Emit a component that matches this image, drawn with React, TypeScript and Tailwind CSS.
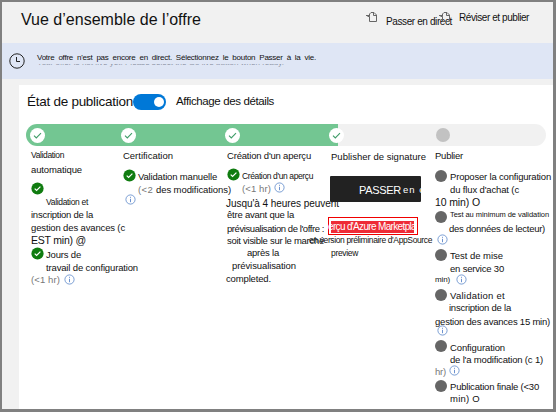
import { useLayoutEffect, useRef, useState } from "react";
import type { ReactNode } from "react";

/* Text tracked so that it fills a given measure. */
function Fit({ w, className = "", children }: { w: number; className?: string; children: string }) {
  const ref = useRef<HTMLSpanElement>(null);
  const [spacing, setSpacing] = useState(0);
  useLayoutEffect(() => {
    const el = ref.current;
    if (el) setSpacing((w - el.getBoundingClientRect().width) / children.length);
  }, [w, children]);
  return (
    <span ref={ref} className={`shrink-0 whitespace-pre leading-[12px] ${className}`} style={{ letterSpacing: spacing }}>
      {children}
    </span>
  );
}

function Row({ className, children }: { className: string; children: ReactNode }) {
  return <div className={`flex shrink-0 items-end ${className}`}>{children}</div>;
}

function Done() {
  return (
    <svg className="mb-[1px] size-[13px] shrink-0" viewBox="0 0 13 13">
      <circle cx="6.5" cy="6.5" r="6.1" fill="#107c10" />
      <path d="M3.7 6.6 5.6 8.5 9.4 4.7" fill="none" stroke="#fff" strokeWidth="1.2" />
    </svg>
  );
}

function Pending() {
  return <span className="mb-[1px] size-[12px] shrink-0 rounded-full bg-[#666666]" />;
}

function Info() {
  return (
    <svg className="size-[11px] shrink-0" viewBox="0 0 11 11" fill="none" stroke="#5b86c9">
      <circle cx="5.5" cy="5.5" r="4.6" strokeWidth="0.8" />
      <path d="M5.5 4.8v3.4M5.5 2.8v1" strokeWidth="0.9" />
    </svg>
  );
}

function Step() {
  return (
    <span className="flex size-[15px] shrink-0 items-center justify-center rounded-full bg-white">
      <svg className="size-[9px]" viewBox="0 0 9 9">
        <path d="M1 4.7 3.3 7 8 2.2" fill="none" stroke="#3f9c68" strokeWidth="1.1" />
      </svg>
    </span>
  );
}

function PageIcon() {
  return (
    <svg className="size-[12px] shrink-0" viewBox="0 0 12 12" fill="none" stroke="#666">
      <path d="M3.5 5.5V3L5 1.5H8L10.5 4V10.5H3.5V5.5M7.5 1.5V4.5H10.5" strokeWidth="1" />
      <path d="M0 4.5h3.5M1.5 5.5h2" strokeWidth="1" />
    </svg>
  );
}

export default function App() {
  return (
    <div className="h-[412px] w-[556px] overflow-hidden border-t-2 border-r-[3px] border-b-[3px] border-l-2 border-[#808080] bg-[#f1f1f1] font-['Liberation_Sans',Arial,sans-serif] text-[9.5px] text-[#111]">
      <header className="flex h-[41px] items-start">
        <Fit w={180} className="ml-[19px] mt-[12px] text-[16px]">Vue d’ensemble de l’offre</Fit>
        <div className="ml-[165px] mt-[9px]"><PageIcon /></div>
        <Fit w={66} className="ml-[8px] mt-[14px] text-[10px]">Passer en direct</Fit>
        <div className="-ml-[13px] mt-[9px]"><PageIcon /></div>
        <Fit w={70} className="ml-[8px] mt-[10px] text-[10px]">Réviser et publier</Fit>
      </header>

      <section className="flex h-[36px] items-start bg-[#dfe6f5]">
        <svg className="ml-[7px] mt-[10px] size-[16px]" viewBox="0 0 16 16" fill="none" stroke="#222">
          <circle cx="8" cy="8" r="7.2" />
          <path d="M7.5 4v4.5H11" />
        </svg>
        <div className="ml-[12px] mt-[9px] flex flex-col items-start">
          <Fit w={279} className="text-[8px] [word-spacing:2px]">Votre offre n'est pas encore en direct. Sélectionnez le bouton Passer à la vie.</Fit>
          <div className="flex h-[3px] w-[247px] items-start overflow-hidden text-[#8d94a5]">
            <Fit w={247} className="-mt-[7px] text-[8px]">Your offer is not live yet. Please select the Go live button when ready.</Fit>
          </div>
        </div>
      </section>

      <main className="ml-[17px] mt-[6px] h-[324px] bg-white">
        <div className="flex h-[39px] items-start">
          <Fit w={106} className="ml-[8px] mt-[11px] text-[13.5px]">État de publication</Fit>
          <div className="mt-[9px] flex h-[16px] w-[33px] items-center justify-end rounded-full bg-[#0078d7] pr-[2px]">
            <span className="size-[10px] rounded-full bg-white" />
          </div>
          <Fit w={98} className="ml-[10px] mt-[10px] text-[11.5px]">Affichage des détails</Fit>
        </div>

        <div className="ml-[7px] flex h-[22px] w-[520px] items-center overflow-hidden rounded-full bg-[linear-gradient(to_right,#73c692_312px,#f1f1f1_312px)] pl-[4px]">
          <Step />
          <div className="w-[76px]" />
          <Step />
          <div className="w-[89px]" />
          <Step />
          <div className="w-[89px]" />
          <Step />
          <div className="w-[92px]" />
          <span className="size-[14px] rounded-full bg-[#c2c2c2]" />
        </div>

        <div className="flex">
          <div className="flex w-[92px] shrink-0 flex-col pl-[12px]">
            <Row className="h-[15px]"><Fit w={33} className="text-[8.5px]">Validation</Fit></Row>
            <Row className="h-[15px]"><Fit w={51}>automatique</Fit></Row>
            <Row className="h-[20px]"><Done /></Row>
            <Row className="h-[12px] pl-[15px]"><Fit w={42} className="text-[8.5px]">Validation et</Fit></Row>
            <Row className="h-[13px]"><Fit w={62}>inscription de la</Fit></Row>
            <Row className="h-[13px]"><Fit w={94}>gestion des avances (c</Fit></Row>
            <Row className="h-[12px]"><Fit w={55} className="text-[10.5px]">EST min) @</Fit></Row>
            <Row className="h-[15px]"><Done /><Fit w={35} className="ml-[2px]">Jours de</Fit></Row>
            <Row className="h-[13px] pl-[15px]"><Fit w={92}>travail de configuration</Fit></Row>
            <Row className="h-[12px]"><Fit w={29} className="text-[#777]">{"(<1 hr)"}</Fit><span className="ml-[4px] mb-[1px]"><Info /></span></Row>
          </div>

          <div className="flex w-[104px] shrink-0 flex-col pl-[12px]">
            <Row className="h-[16px]"><Fit w={50}>Certification</Fit></Row>
            <Row className="h-[21px]"><Done /><Fit w={79} className="ml-[2px]">Validation manuelle</Fit></Row>
            <Row className="h-[13px] pl-[15px]"><Fit w={15} className="text-[#777]">{"(<2"}</Fit><Fit w={75} className="ml-[3px]">des modifications)</Fit></Row>
            <Row className="h-[9px] pl-[2px]"><Info /></Row>
          </div>

          <div className="flex w-[104px] shrink-0 flex-col pl-[12px]">
            <Row className="h-[16px]"><Fit w={84}>Création d'un aperçu</Fit></Row>
            <Row className="h-[20px]"><Done /><Fit w={71} className="ml-[2px] text-[8.5px]">Création d'un aperçu</Fit></Row>
            <Row className="h-[13px] pl-[15px]"><Fit w={29} className="text-[#777]">{"(<1 hr)"}</Fit><span className="ml-[3px] mb-[2px]"><Info /></span></Row>
            <Row className="h-[15px]"><Fit w={113} className="-ml-[1px] text-[10px]">Jusqu'à 4 heures peuvent</Fit></Row>
            <Row className="h-[11px]"><Fit w={67}>être avant que la</Fit></Row>
            <Row className="h-[14px]"><Fit w={97}>prévisualisation de l'offre :</Fit></Row>
            <Row className="h-[12px]"><Fit w={97}>soit visible sur le marché</Fit></Row>
            <Row className="h-[12px] pl-[20px]"><Fit w={32}>après la</Fit></Row>
            <Row className="h-[13px] pl-[5px]"><Fit w={64}>prévisualisation</Fit></Row>
            <Row className="h-[13px]"><Fit w={45} className="-ml-[1px]">completed.</Fit></Row>
          </div>

          <div className="flex w-[104px] shrink-0 flex-col pl-[12px]">
            <Row className="h-[17px]"><Fit w={95}>Publisher de signature</Fit></Row>
            <div className="-ml-[1px] mt-[13px] flex h-[26px] w-[91px] items-center overflow-hidden rounded-[1px] bg-[#222222] pl-[29px] text-white">
              <Fit w={42} className="mt-[1px] text-[11px]">PASSER</Fit>
              <Fit w={22} className="ml-[2px] mt-[2px]">en c</Fit>
            </div>
            <div className="-ml-[3px] mt-[15px] flex h-[18px] w-[90px] items-center border-[1.5px] border-[#f00000] bg-white">
              <div className="ml-[2px] mt-[2px] flex h-[12px] w-[83px] items-center bg-[#ee2b36] text-white">
                <Fit w={88} className="-ml-[3px] text-[10px]">erçu d'Azure Marketpla</Fit>
              </div>
            </div>
            <Row className="h-[11px]"><Fit w={123} className="-ml-[22px] text-[8.5px]">en version préliminaire d'AppSource</Fit></Row>
            <Row className="h-[13px]"><Fit w={27} className="text-[8.5px]">preview</Fit></Row>
          </div>

          <div className="flex shrink-0 flex-col pl-[12px]">
            <Row className="h-[16px]"><Fit w={28}>Publier</Fit></Row>
            <Row className="h-[21px]"><Pending /><Fit w={101} className="ml-[3px]">Proposer la configuration</Fit></Row>
            <Row className="h-[13px] pl-[15px]"><Fit w={69}>du flux d'achat (c</Fit></Row>
            <Row className="h-[12px]"><Fit w={45} className="text-[10.5px]">10 min) O</Fit></Row>
            <Row className="h-[13px]"><span className="-mb-[3px] flex"><Pending /></span><Fit w={99} className="ml-[3px] text-[7.5px]">Test au minimum de validation</Fit></Row>
            <Row className="h-[14px] pl-[14px]"><Fit w={96}>des données de lecteur)</Fit></Row>
            <Row className="h-[10px] pl-[2px]"><Info /></Row>
            <Row className="h-[17px]"><Pending /><Fit w={53} className="ml-[3px]">Test de mise</Fit></Row>
            <Row className="h-[13px] pl-[15px]"><Fit w={54}>en service 30</Fit></Row>
            <Row className="h-[11px]"><Fit w={15} className="text-[8px]">min)</Fit><span className="ml-[6px] mb-[1px]"><Info /></span></Row>
            <Row className="h-[16px]"><Pending /><Fit w={55} className="ml-[3px]">Validation et</Fit></Row>
            <Row className="h-[12px] pl-[14px]"><Fit w={62}>inscription de la</Fit></Row>
            <Row className="h-[14px]"><Fit w={115}>gestion des avances 15 min)</Fit></Row>
            <Row className="h-[8px] pl-[2px]"><Info /></Row>
            <Row className="h-[18px]"><span className="mb-[1px] flex"><Pending /></span><Fit w={55} className="ml-[3px]">Configuration</Fit></Row>
            <Row className="h-[12px] pl-[15px]"><Fit w={93}>de l'a modification (c 1)</Fit></Row>
            <Row className="h-[12px]"><Fit w={11} className="text-[#777]">hr)</Fit><span className="ml-[3px] mb-[2px]"><Info /></span></Row>
            <Row className="h-[15px]"><Pending /><Fit w={89} className="ml-[3px]">{"Publication finale (<30"}</Fit></Row>
            <Row className="h-[12px] pl-[15px]"><Fit w={30}>min) O</Fit></Row>
          </div>
        </div>
      </main>
    </div>
  );
}
